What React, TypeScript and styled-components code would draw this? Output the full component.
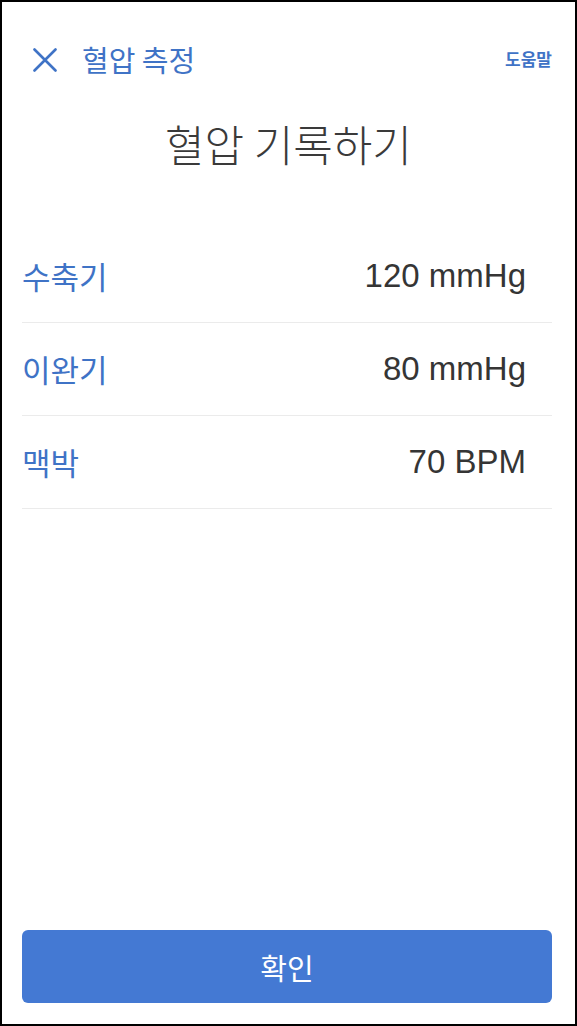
import React from "react";
import styled, { createGlobalStyle } from "styled-components";

const Global = createGlobalStyle`
  html, body { margin: 0; padding: 0; background: #fff; }
  #root { width: 577px; height: 1026px; }
  * { box-sizing: border-box; }
`;

const BLUE = "#3f73c6";

const Screen = styled.div`
  width: 577px;
  height: 1026px;
  border: 2px solid #000;
  background: #fff;
  display: flex;
  flex-direction: column;
  padding: 37px 23px 21px 20px;
  font-family: "Liberation Sans", "Noto Sans CJK KR", sans-serif;
`;

const Header = styled.header`
  display: flex;
  align-items: center;
  height: 40px;
`;

const CloseButton = styled.button`
  border: 0;
  background: none;
  padding: 0;
  margin: 2px 0 0 11px;
  width: 24px;
  height: 24px;
  display: flex;
  align-items: center;
  justify-content: center;
  color: ${BLUE};
`;

const HeaderTitle = styled.h1`
  margin: 0 0 0 25px;
  font-family: "Noto Sans CJK KR", sans-serif;
  font-size: 29px;
  font-weight: 400;
  line-height: 40px;
  color: ${BLUE};
  flex: 1;
`;

const HelpLink = styled.span`
  font-family: "Noto Sans CJK KR", sans-serif;
  font-size: 17px;
  font-weight: 700;
  color: ${BLUE};
  line-height: 40px;
`;

const PageTitle = styled.h2`
  margin: 39px 0 0 0;
  text-align: center;
  font-family: "Noto Sans CJK KR", sans-serif;
  font-weight: 300;
  font-size: 43px;
  line-height: 50px;
  color: #3a3a3a;
  padding-left: 3px;
`;

const List = styled.div`
  margin-top: 62px;
  display: flex;
  flex-direction: column;
`;

const Row = styled.div`
  height: 93px;
  display: flex;
  align-items: center;
  justify-content: space-between;
  border-bottom: 1px solid #ebebeb;
  padding-right: 26px;
`;

const Label = styled.span`
  font-family: "Noto Sans CJK KR", sans-serif;
  font-size: 31px;
  color: ${BLUE};
  line-height: 40px;
`;

const Value = styled.span`
  font-family: "Liberation Sans", sans-serif;
  font-size: 33px;
  color: #353535;
  line-height: 40px;
`;

const Spacer = styled.div`
  flex: 1;
`;

const ConfirmButton = styled.button`
  height: 73px;
  width: 100%;
  border: 0;
  border-radius: 6px;
  background: #4479d3;
  color: #fff;
  font-family: "Noto Sans CJK KR", sans-serif;
  font-size: 29px;
  display: flex;
  align-items: center;
  justify-content: center;
`;

const rows = [
  { label: "수축기", value: "120 mmHg" },
  { label: "이완기", value: "80 mmHg" },
  { label: "맥박", value: "70 BPM" },
];

export default function App() {
  return (
    <>
      <Global />
      <Screen>
        <Header>
          <CloseButton aria-label="닫기">
            <svg width="24" height="24" viewBox="0 0 24 24">
              <path d="M1.5 1.5 L22.5 22.5 M22.5 1.5 L1.5 22.5" stroke="currentColor" strokeWidth="2.6" strokeLinecap="round" />
            </svg>
          </CloseButton>
          <HeaderTitle>혈압 측정</HeaderTitle>
          <HelpLink>도움말</HelpLink>
        </Header>
        <PageTitle>혈압 기록하기</PageTitle>
        <List>
          {rows.map((r) => (
            <Row key={r.label}>
              <Label>{r.label}</Label>
              <Value>{r.value}</Value>
            </Row>
          ))}
        </List>
        <Spacer />
        <ConfirmButton>확인</ConfirmButton>
      </Screen>
    </>
  );
}
